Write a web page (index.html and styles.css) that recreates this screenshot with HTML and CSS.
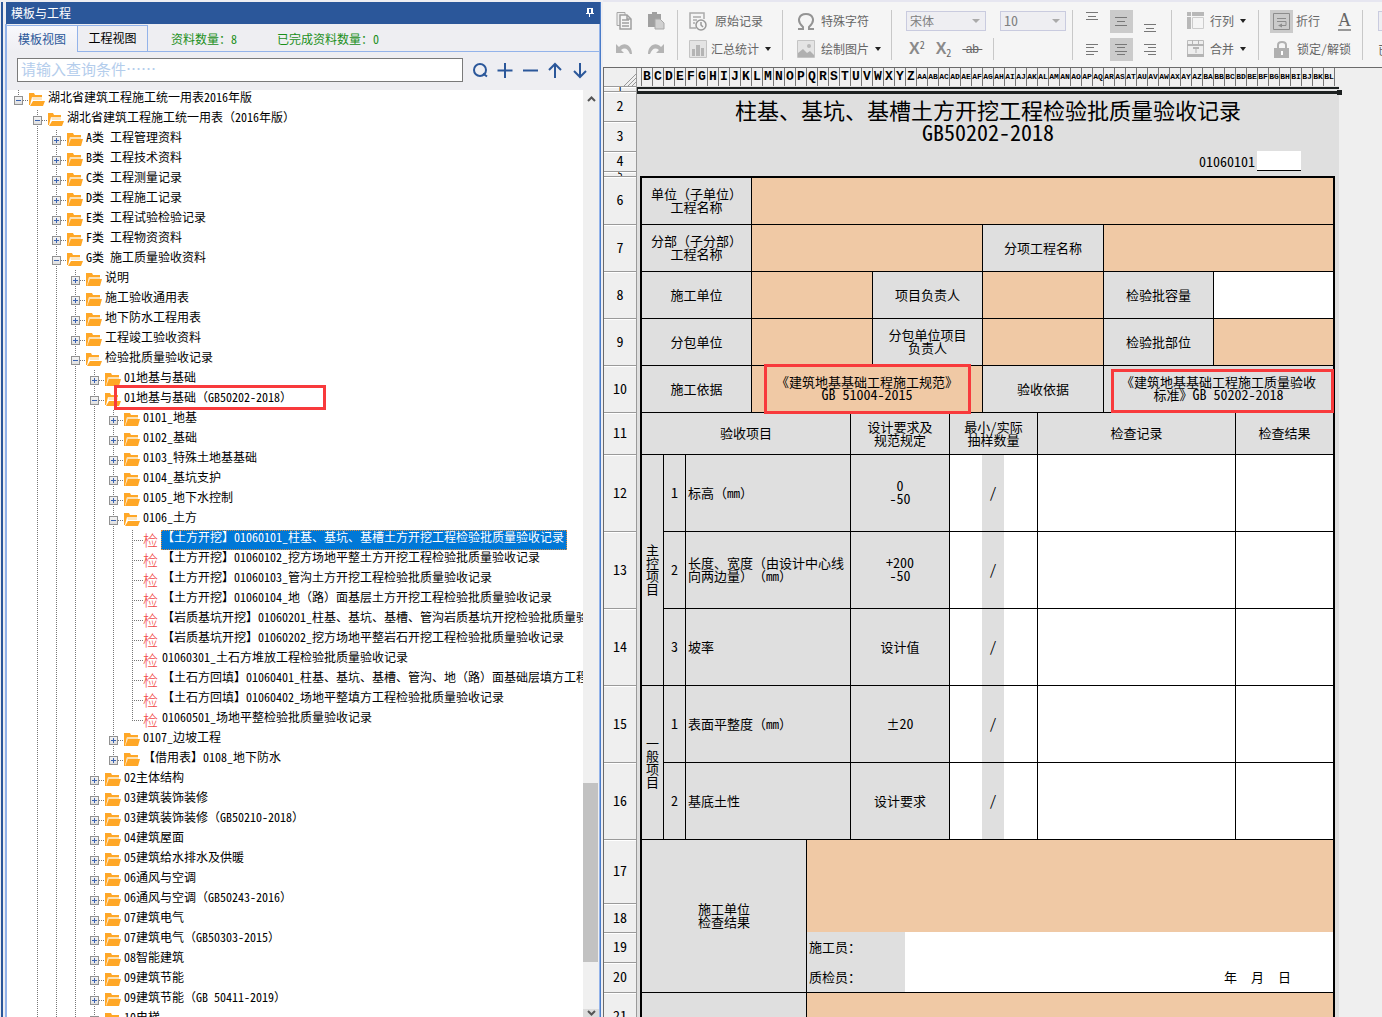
FILE: index.html
```html
<!DOCTYPE html>
<html lang="zh-CN">
<head>
<meta charset="utf-8">
<title>模板与工程</title>
<link rel="stylesheet" href="styles.css">
</head>
<body>
<svg class="defs" aria-hidden="true">
  <symbol id="fc" viewBox="0 0 16 14"><path fill="#ffa726" d="M0 0h6l1 2h7v2H3L1 13H0z"/><path fill="#fbe0b4" d="M3 4h11v2H5L2 12z"/><path fill="#ffa726" d="M4 6h12l-2 7H1z"/></symbol>
  <symbol id="fo" viewBox="0 0 16 14"><path fill="#ffa726" d="M0 0h5l1 2h7v2H3L1 12H0z"/><path fill="#fbe6c4" d="M3 4h10v3H4z"/><path fill="#ffa726" d="M4 8h12l-2 5H1z"/></symbol>
</svg>
<div class="app">
<aside class="dock">
  <header class="title"><span>模板与工程</span>
    <svg width="8" height="10" viewBox="0 0 8 10"><path fill="#fff" d="M1 1h6v5h1v1H4v3H3V7H0V6h1zM3 2v4h2V2z" fill-rule="evenodd"/></svg>
  </header>
  <div class="panel">
    <div class="tabs">
      <button class="tab on">模板视图</button><button class="tab">工程视图</button>
      <div class="counts"><span>资料数量：8</span><span>已完成资料数量：0</span></div>
    </div>
    <div class="search">
      <input type="text" aria-label="查询条件" placeholder="请输入查询条件……">
      <div class="tools">
        <button aria-label="查询"><svg width="18" height="18" viewBox="0 0 18 18"><circle cx="9" cy="9" r="6"/><path d="M12 12.500l4 3"/></svg></button>
        <button aria-label="展开"><svg width="18" height="18" viewBox="0 0 18 18"><path d="M9 2v15M1.500 9.500h15"/></svg></button>
        <button aria-label="收起"><svg width="18" height="18" viewBox="0 0 18 18"><path d="M2 9.500h15"/></svg></button>
        <button aria-label="上一个"><svg width="18" height="18" viewBox="0 0 18 18"><path d="M9 17V3M3 9l6-6 6 6"/></svg></button>
        <button aria-label="下一个"><svg width="18" height="18" viewBox="0 0 18 18"><path d="M9 2v14M3 10l6 6 6-6"/></svg></button>
      </div>
    </div>
    <div class="view">
      <div class="scroll">
      <ul class="tree root">
        <li><div class="row"><button class="ex open" aria-label="收起"></button><svg><use href="#fo"/></svg><span>湖北省建筑工程施工统一用表2016年版</span></div>
        <ul>
          <li><div class="row"><button class="ex open" aria-label="收起"></button><svg><use href="#fo"/></svg><span>湖北省建筑工程施工统一用表<span class="p">（</span>2016年版<span class="p">）</span></span></div>
          <ul>
            <li><div class="row"><button class="ex" aria-label="展开"></button><svg><use href="#fc"/></svg><span>A类 工程管理资料</span></div></li>
            <li><div class="row"><button class="ex" aria-label="展开"></button><svg><use href="#fc"/></svg><span>B类 工程技术资料</span></div></li>
            <li><div class="row"><button class="ex" aria-label="展开"></button><svg><use href="#fc"/></svg><span>C类 工程测量记录</span></div></li>
            <li><div class="row"><button class="ex" aria-label="展开"></button><svg><use href="#fc"/></svg><span>D类 工程施工记录</span></div></li>
            <li><div class="row"><button class="ex" aria-label="展开"></button><svg><use href="#fc"/></svg><span>E类 工程试验检验记录</span></div></li>
            <li><div class="row"><button class="ex" aria-label="展开"></button><svg><use href="#fc"/></svg><span>F类 工程物资资料</span></div></li>
            <li><div class="row"><button class="ex open" aria-label="收起"></button><svg><use href="#fo"/></svg><span>G类 施工质量验收资料</span></div>
            <ul>
              <li><div class="row"><button class="ex" aria-label="展开"></button><svg><use href="#fc"/></svg><span>说明</span></div></li>
              <li><div class="row"><button class="ex" aria-label="展开"></button><svg><use href="#fc"/></svg><span>施工验收通用表</span></div></li>
              <li><div class="row"><button class="ex" aria-label="展开"></button><svg><use href="#fc"/></svg><span>地下防水工程用表</span></div></li>
              <li><div class="row"><button class="ex" aria-label="展开"></button><svg><use href="#fc"/></svg><span>工程竣工验收资料</span></div></li>
              <li><div class="row"><button class="ex open" aria-label="收起"></button><svg><use href="#fo"/></svg><span>检验批质量验收记录</span></div>
              <ul>
                <li><div class="row"><button class="ex" aria-label="展开"></button><svg><use href="#fc"/></svg><span>01地基与基础</span></div></li>
                <li><div class="row marked"><button class="ex open" aria-label="收起"></button><svg><use href="#fo"/></svg><span>01地基与基础<span class="p">（</span>GB50202-2018<span class="p">）</span></span></div>
                <ul class="ends">
                  <li><div class="row"><button class="ex" aria-label="展开"></button><svg><use href="#fc"/></svg><span>0101_地基</span></div></li>
                  <li><div class="row"><button class="ex" aria-label="展开"></button><svg><use href="#fc"/></svg><span>0102_基础</span></div></li>
                  <li><div class="row"><button class="ex" aria-label="展开"></button><svg><use href="#fc"/></svg><span>0103_特殊土地基基础</span></div></li>
                  <li><div class="row"><button class="ex" aria-label="展开"></button><svg><use href="#fc"/></svg><span>0104_基坑支护</span></div></li>
                  <li><div class="row"><button class="ex" aria-label="展开"></button><svg><use href="#fc"/></svg><span>0105_地下水控制</span></div></li>
                  <li><div class="row"><button class="ex open" aria-label="收起"></button><svg><use href="#fo"/></svg><span>0106_土方</span></div>
                  <ul class="ends">
                    <li><div class="row leaf"><i>检</i><span class="sel">【土方开挖】01060101_柱基、基坑、基槽土方开挖工程检验批质量验收记录</span></div></li>
                    <li><div class="row leaf"><i>检</i><span>【土方开挖】01060102_挖方场地平整土方开挖工程检验批质量验收记录</span></div></li>
                    <li><div class="row leaf"><i>检</i><span>【土方开挖】01060103_管沟土方开挖工程检验批质量验收记录</span></div></li>
                    <li><div class="row leaf"><i>检</i><span>【土方开挖】01060104_地<span class="p">（</span>路<span class="p">）</span>面基层土方开挖工程检验批质量验收记录</span></div></li>
                    <li><div class="row leaf"><i>检</i><span>【岩质基坑开挖】01060201_柱基、基坑、基槽、管沟岩质基坑开挖检验批质量验收记录</span></div></li>
                    <li><div class="row leaf"><i>检</i><span>【岩质基坑开挖】01060202_挖方场地平整岩石开挖工程检验批质量验收记录</span></div></li>
                    <li><div class="row leaf"><i>检</i><span>01060301_土石方堆放工程检验批质量验收记录</span></div></li>
                    <li><div class="row leaf"><i>检</i><span>【土石方回填】01060401_柱基、基坑、基槽、管沟、地<span class="p">（</span>路<span class="p">）</span>面基础层填方工程检验批</span></div></li>
                    <li><div class="row leaf"><i>检</i><span>【土石方回填】01060402_场地平整填方工程检验批质量验收记录</span></div></li>
                    <li><div class="row leaf"><i>检</i><span>01060501_场地平整检验批质量验收记录</span></div></li>
                  </ul></li>
                  <li><div class="row"><button class="ex" aria-label="展开"></button><svg><use href="#fc"/></svg><span>0107_边坡工程</span></div></li>
                  <li><div class="row"><button class="ex" aria-label="展开"></button><svg><use href="#fc"/></svg><span>【借用表】0108_地下防水</span></div></li>
                </ul></li>
                <li><div class="row"><button class="ex" aria-label="展开"></button><svg><use href="#fc"/></svg><span>02主体结构</span></div></li>
                <li><div class="row"><button class="ex" aria-label="展开"></button><svg><use href="#fc"/></svg><span>03建筑装饰装修</span></div></li>
                <li><div class="row"><button class="ex" aria-label="展开"></button><svg><use href="#fc"/></svg><span>03建筑装饰装修<span class="p">（</span>GB50210-2018<span class="p">）</span></span></div></li>
                <li><div class="row"><button class="ex" aria-label="展开"></button><svg><use href="#fc"/></svg><span>04建筑屋面</span></div></li>
                <li><div class="row"><button class="ex" aria-label="展开"></button><svg><use href="#fc"/></svg><span>05建筑给水排水及供暖</span></div></li>
                <li><div class="row"><button class="ex" aria-label="展开"></button><svg><use href="#fc"/></svg><span>06通风与空调</span></div></li>
                <li><div class="row"><button class="ex" aria-label="展开"></button><svg><use href="#fc"/></svg><span>06通风与空调<span class="p">（</span>GB50243-2016<span class="p">）</span></span></div></li>
                <li><div class="row"><button class="ex" aria-label="展开"></button><svg><use href="#fc"/></svg><span>07建筑电气</span></div></li>
                <li><div class="row"><button class="ex" aria-label="展开"></button><svg><use href="#fc"/></svg><span>07建筑电气<span class="p">（</span>GB50303-2015<span class="p">）</span></span></div></li>
                <li><div class="row"><button class="ex" aria-label="展开"></button><svg><use href="#fc"/></svg><span>08智能建筑</span></div></li>
                <li><div class="row"><button class="ex" aria-label="展开"></button><svg><use href="#fc"/></svg><span>09建筑节能</span></div></li>
                <li><div class="row"><button class="ex" aria-label="展开"></button><svg><use href="#fc"/></svg><span>09建筑节能<span class="p">（</span>GB 50411-2019<span class="p">）</span></span></div></li>
                <li><div class="row"><button class="ex" aria-label="展开"></button><svg><use href="#fc"/></svg><span>10电梯</span></div></li>
              </ul></li>
            </ul></li>
          </ul></li>
        </ul></li>
      </ul>
      </div>
      <div class="bar">
        <button aria-label="向上滚动"><svg width="9" height="6" viewBox="0 0 9 6"><path d="M1 5l3.500-3.500L8 5"/></svg></button>
        <div class="track"><div class="thumb"></div></div>
        <button class="down" aria-label="向下滚动"><svg width="9" height="6" viewBox="0 0 9 6"><path d="M1 1l3.500 3.500L8 1"/></svg></button>
      </div>
    </div>
  </div>
</aside>

<main class="main">
  <div class="toolbar">
    <div class="group g1">
      <div class="line">
        <button aria-label="复制"><svg width="18" height="20" viewBox="0 0 18 20"><path fill="#eee" stroke="#a6a6a6" d="M2 1.500h8v13H2z"/><path fill="#f5f5f5" stroke="#a0a0a0" stroke-width="1.500" d="M5 4h7l4 4v10H5z"/><path stroke="#a0a0a0" stroke-width="1.500" fill="none" d="M7 9h7M7 12h7M7 15h7M12 4v4h4"/></svg></button>
        <button aria-label="粘贴"><svg width="18" height="20" viewBox="0 0 18 20"><path fill="#a0a0a0" d="M1 3h4V1h5v2h4v5H8v8H1z"/><path fill="#d0d0d0" stroke="#a8a8a8" d="M8 8h5l4 4v6H8z"/></svg></button>
      </div>
      <div class="line">
        <button aria-label="撤销"><svg width="18" height="14" viewBox="0 0 18 14"><path fill="#b4b4b4" d="M1 2v9h8L6 8c4-3 7-1 9 4h2C17 3 9-1 4 5z"/></svg></button>
        <button aria-label="重做"><svg width="18" height="14" viewBox="0 0 18 14"><path fill="#b4b4b4" d="M17 2v9H9l3-3c-4-3-7-1-9 4H1C1 3 9-1 14 5z"/></svg></button>
      </div>
    </div>
    <div class="group g2">
      <div class="line"><button><svg width="18" height="19" viewBox="0 0 18 19"><path fill="none" stroke="#aaa" stroke-width="1.500" d="M7 16H1V1h14v6M4 5h8M4 8h4M4 11h2"/><circle cx="12" cy="13" r="5" fill="#f5f5f5" stroke="#999" stroke-width="1.500"/><path fill="none" stroke="#999" stroke-width="1.500" d="M12 10v3l2 2"/></svg><span class="wide">原始记录</span></button></div>
      <div class="line"><button><svg width="18" height="18" viewBox="0 0 18 18"><path fill="#e4e4e4" stroke="#c4c4c4" d="M.5.500h17v17H.5z"/><path fill="#b4b4b4" d="M3 9h3v7H3zM7 5h4v11H7zM12 8h3v8h-3z"/></svg><span>汇总统计</span><b class="caret"></b></button></div>
    </div>
    <div class="group g3">
      <div class="line"><button><svg width="18" height="19" viewBox="0 0 18 19"><path fill="none" stroke="#949494" stroke-width="2" d="M1 17h5v-2C-1 9 2 2 9 2s10 7 3 13v2h5"/></svg><span>特殊字符</span></button></div>
      <div class="line"><button><svg width="18" height="18" viewBox="0 0 18 18"><path fill="#e4e4e4" stroke="#c4c4c4" d="M.5.500h17v17H.5z"/><path fill="#b0b0b0" d="M1 17v-4l5-4 4 4 3-2 4 4v2z"/><circle cx="12" cy="6" r="2" fill="#b8b8b8"/></svg><span>绘制图片</span><b class="caret"></b></button></div>
    </div>
    <div class="group g4">
      <div class="line">
        <span class="combo font"><select aria-label="字体"><option>宋体</option></select></span>
        <span class="combo size"><select aria-label="字号"><option>10</option></select></span>
      </div>
      <div class="line fmt"><button aria-label="上标"><strong>X</strong><sup>2</sup></button><button aria-label="下标"><strong>X</strong><sub>2</sub></button><button><s>&nbsp;ab&nbsp;</s></button><b class="short"></b></div>
    </div>
    <div class="group g5">
      <div class="line">
        <button aria-label="顶端对齐"><svg width="13" height="23" viewBox="0 0 13 23"><path d="M0 2.500h12M2 6.500h8M0 9.500h12"/></svg></button>
        <button class="on" aria-label="垂直居中"><svg width="13" height="23" viewBox="0 0 13 23"><path d="M0 7.500h12M2 11.500h8M0 15.500h12"/></svg></button>
        <button aria-label="底端对齐"><svg width="13" height="23" viewBox="0 0 13 23"><path d="M0 14.500h12M2 18.500h8M0 21.500h12"/></svg></button>
      </div>
      <div class="line">
        <button aria-label="左对齐"><svg width="13" height="23" viewBox="0 0 13 23"><path d="M0 6.500h12M0 9.500h8M0 13.500h12M0 16.500h8"/></svg></button>
        <button class="on" aria-label="居中"><svg width="13" height="23" viewBox="0 0 13 23"><path d="M0 6.500h12M2 9.500h8M0 13.500h12M2 16.500h8"/></svg></button>
        <button aria-label="右对齐"><svg width="13" height="23" viewBox="0 0 13 23"><path d="M0 6.500h12M4 9.500h8M0 13.500h12M4 16.500h8"/></svg></button>
      </div>
    </div>
    <div class="group g6">
      <div class="line"><button><svg width="18" height="18" viewBox="0 0 18 18"><path fill="#b8b8b8" d="M0 0h4v4H0zM5 0h12v4H5zM0 5h4v12H0z"/><path fill="#f5f5f5" stroke="#ccc" d="M5.500 5.500h11v11h-11z"/></svg><span>行列</span><b class="caret"></b></button></div>
      <div class="line"><button><svg width="18" height="18" viewBox="0 0 18 18"><path fill="#eee" stroke="#bbb" d="M.5.500h16v16H.5z"/><path fill="#b4b4b4" d="M0 4h17v2H0zM0 14h17v3H0zM5 0h1v5H5zM11 0h1v5h-1zM6 7h6v2H9.500v4h-1V9H6z"/></svg><span>合并</span><b class="caret"></b></button></div>
    </div>
    <div class="group g7">
      <div class="line"><button class="wrap"><em><svg width="17" height="17" viewBox="0 0 17 17"><path fill="none" stroke="#8c8c8c" d="M.5.500h16v16H.5zM4 5.500h9M4 8.500h9v4H9"/><path fill="#8c8c8c" d="M5 12.500l4-2v4z"/></svg></em><span>折行</span></button><button class="color">A</button></div>
      <div class="line"><button class="lock"><svg width="16" height="17" viewBox="0 0 16 17"><path fill="none" stroke="#b0b0b0" stroke-width="2" d="M4 8V4c0-4 8-4 8 0v4"/><path fill="#b0b0b0" d="M0 7h15v10H0z"/><path fill="#fff" d="M7 10h2v4H7z"/></svg><span>锁定/解锁</span></button></div>
    </div>
    <div class="group g8">
      <div class="line"><span class="combo"><select aria-label="样式"><option> </option></select></span></div>
      <div class="line">已</div>
    </div>
  </div>

  <div class="sheet">
  <table>
    <colgroup><col class="w33"><col class="w3"><col class="w23"><col class="w22"><col class="w66"><col class="w55"><col class="w44"><col class="w22"><col class="w33"><col class="w44"><col class="w33"><col class="w22"><col class="w33"><col class="w66"><col class="w110"><col class="w22"><col class="w22"><col class="w44"><col class="w34"><col class="w4"></colgroup>
    <thead><tr class="heads"><th class="corner"><svg width="12" height="12" viewBox="0 0 12 12"><path stroke="#999" d="M0 12L12 0M4 12l8-8M8 12l4-4"/></svg></th><th colspan="19"><div class="letters"><span>B</span><span>C</span><span>D</span><span>E</span><span>F</span><span>G</span><span>H</span><span>I</span><span>J</span><span>K</span><span>L</span><span>M</span><span>N</span><span>O</span><span>P</span><span>Q</span><span>R</span><span>S</span><span>T</span><span>U</span><span>V</span><span>W</span><span>X</span><span>Y</span><span>Z</span><span class="two">AA</span><span class="two">AB</span><span class="two">AC</span><span class="two">AD</span><span class="two">AE</span><span class="two">AF</span><span class="two">AG</span><span class="two">AH</span><span class="two">AI</span><span class="two">AJ</span><span class="two">AK</span><span class="two">AL</span><span class="two">AM</span><span class="two">AN</span><span class="two">AO</span><span class="two">AP</span><span class="two">AQ</span><span class="two">AR</span><span class="two">AS</span><span class="two">AT</span><span class="two">AU</span><span class="two">AV</span><span class="two">AW</span><span class="two">AX</span><span class="two">AY</span><span class="two">AZ</span><span class="two">BA</span><span class="two">BB</span><span class="two">BC</span><span class="two">BD</span><span class="two">BE</span><span class="two">BF</span><span class="two">BG</span><span class="two">BH</span><span class="two">BI</span><span class="two">BJ</span><span class="two">BK</span><span class="two">BL</span></div></th></tr></thead>
    <tbody>
    <tr class="h5"><th><div class="clip">1</div></th><td colspan="19" class="bg"><div class="cursor"></div></td></tr>
    <tr class="h30"><th>2</th><td colspan="19" rowspan="2" class="bg heading">柱基、基坑、基槽土方开挖工程检验批质量验收记录<br>GB50202-2018</td></tr>
    <tr class="h30"><th>3</th></tr>
    <tr class="h20"><th>4</th><td colspan="16" class="bg code">01060101</td><td class="blank"></td><td colspan="2" class="bg"></td></tr>
    <tr class="h5"><th><div class="clip">5</div></th><td colspan="19" class="bg"></td></tr>
    <tr class="h48 top"><th>6</th><td rowspan="16" class="bg"></td><td colspan="3" class="c first">单位<span class="p">（</span>子单位<span class="p">）</span><br>工程名称</td><td colspan="14" class="c o last"></td><td rowspan="16" class="bg"></td></tr>
    <tr class="h47"><th>7</th><td colspan="3" class="c first">分部<span class="p">（</span>子分部<span class="p">）</span><br>工程名称</td><td colspan="6" class="c o"></td><td colspan="3" class="c">分项工程名称</td><td colspan="5" class="c o last"></td></tr>
    <tr class="h47"><th>8</th><td colspan="3" class="c first">施工单位</td><td colspan="3" class="c o"></td><td colspan="3" class="c">项目负责人</td><td colspan="3" class="c o"></td><td class="c">检验批容量</td><td colspan="4" class="c w last"></td></tr>
    <tr class="h47"><th>9</th><td colspan="3" class="c first">分包单位</td><td colspan="3" class="c o"></td><td colspan="3" class="c">分包单位项目<br>负责人</td><td colspan="3" class="c o"></td><td class="c">检验批部位</td><td colspan="4" class="c o last"></td></tr>
    <tr class="h47"><th>10</th><td colspan="3" class="c first">施工依据</td><td colspan="6" class="c o mark-a">《建筑地基基础工程施工规范》<br><span class="n">GB 51004-2015</span></td><td colspan="3" class="c">验收依据</td><td colspan="5" class="c last mark-b">《建筑地基基础工程施工质量验收<br>标准》<span class="n">GB 50202-2018</span></td></tr>
    <tr class="h42"><th>11</th><td colspan="5" class="c first">验收项目</td><td colspan="3" class="c">设计要求及<br>规范规定</td><td colspan="3" class="c">最小/实际<br>抽样数量</td><td colspan="3" class="c">检查记录</td><td colspan="3" class="c last">检查结果</td></tr>
    <tr class="h77"><th>12</th><td rowspan="3" class="c first">主<br>控<br>项<br>目</td><td class="c n">1</td><td colspan="3" class="c left">标高<span class="p">（</span>mm<span class="p">）</span></td><td colspan="3" class="c n">0<br>-50</td><td class="c w"></td><td class="c nl n">/</td><td class="c w nl"></td><td colspan="3" class="c w"></td><td colspan="3" class="c w last"></td></tr>
    <tr class="h77"><th>13</th><td class="c n">2</td><td colspan="3" class="c left">长度、宽度<span class="p">（</span>由设计中心线<br>向两边量<span class="p">）（</span>mm<span class="p">）</span></td><td colspan="3" class="c n">+200<br>-50</td><td class="c w"></td><td class="c nl n">/</td><td class="c w nl"></td><td colspan="3" class="c w"></td><td colspan="3" class="c w last"></td></tr>
    <tr class="h77"><th>14</th><td class="c n">3</td><td colspan="3" class="c left">坡率</td><td colspan="3" class="c">设计值</td><td class="c w"></td><td class="c nl n">/</td><td class="c w nl"></td><td colspan="3" class="c w"></td><td colspan="3" class="c w last"></td></tr>
    <tr class="h77"><th>15</th><td rowspan="2" class="c first">一<br>般<br>项<br>目</td><td class="c n">1</td><td colspan="3" class="c left">表面平整度<span class="p">（</span>mm<span class="p">）</span></td><td colspan="3" class="c">±<span class="n">20</span></td><td class="c w"></td><td class="c nl n">/</td><td class="c w nl"></td><td colspan="3" class="c w"></td><td colspan="3" class="c w last"></td></tr>
    <tr class="h77"><th>16</th><td class="c n">2</td><td colspan="3" class="c left">基底土性</td><td colspan="3" class="c">设计要求</td><td class="c w"></td><td class="c nl n">/</td><td class="c w nl"></td><td colspan="3" class="c w"></td><td colspan="3" class="c w last"></td></tr>
    <tr class="h64"><th>17</th><td colspan="4" rowspan="4" class="c first">施工单位<br>检查结果</td><td colspan="13" rowspan="2" class="c o last"></td></tr>
    <tr class="h29"><th>18</th></tr>
    <tr class="h30"><th>19</th><td colspan="3" class="c left nt">施工员：</td><td colspan="10" class="c w nt nl last"></td></tr>
    <tr class="h30"><th>20</th><td colspan="3" class="c left nt">质检员：</td><td colspan="10" class="c w nt nl last date"><span>年</span><span>月</span><span>日</span></td></tr>
    <tr class="h47"><th>21</th><td colspan="4" class="c first"></td><td colspan="13" class="c o last"></td></tr>
    </tbody>
  </table>
  </div>
</main>
</div>
</body>
</html>
```
FILE: styles.css
```css
*, *::before, *::after { box-sizing: border-box; }
body {
  margin: 0;
  font-family: "Noto Sans CJK SC", sans-serif;
  font-size: 12px;
  font-feature-settings: "hwid";
  text-spacing-trim: space-all;
  color: #000;
  background: #eeeef2;
}
button, input, select { font: inherit; font-feature-settings: inherit; color: inherit; }
button { padding: 0; border: 0; background: none; }
.defs { display: none; }
.p { font-feature-settings: normal; }
.app { display: grid; grid-template-columns: 603fr 779fr; height: 100vh; overflow: hidden; }

/* docked template panel */
.dock {
  display: flex; flex-direction: column; min-height: 0; min-width: 0;
  margin: 2px 2px 0 1px; padding-left: 2px;
  border-left: 2px solid #2b579a; border-right: 1px solid #4a7cc8;
}
.title {
  display: flex; align-items: center; justify-content: space-between;
  height: 22px; flex: none; padding: 0 6px 2px 5px; margin-left: 1px;
  background: #2b579a; color: #fff;
}
.panel { display: flex; flex-direction: column; flex: 1; min-height: 0; border-left: 2px solid #93b3ea; border-right: 1px solid #93b3ea; }
.tabs { display: flex; height: 28px; flex: none; padding-top: 1px; border-bottom: 1px solid #93b3ea; }
.tab { width: 70px; padding-bottom: 2px; border-top: 1px solid #93b3ea; border-right: 1px solid #93b3ea; }
.tab.on { width: 71px; margin-bottom: -1px; background: linear-gradient(#f8f8fc, #eeeef2); color: #2b579a; }
.counts { display: flex; align-items: center; gap: 40px; padding-left: 23px; color: #1a8f1a; }
.search { display: flex; align-items: center; height: 38px; flex: none; padding: 0 7px 2px 10px; }
.search input {
  flex: 1; min-width: 0; height: 24px; padding: 0 3px 4px;
  border: 1px solid #7a7a7a; background: #fff; font-size: 15px; line-height: 18px;
}
.search input::placeholder { color: #b4cdec; opacity: 1; }
.tools { display: flex; padding-left: 4px; }
.tools button { width: 25px; height: 24px; display: grid; place-items: center; }
.tools svg { fill: none; stroke: #2b579a; stroke-width: 2; }
.view { display: flex; flex: 1; min-height: 0; background: #fff; }
.scroll { flex: 1; min-width: 0; overflow: hidden; }
.bar { width: 16px; flex: none; display: flex; flex-direction: column; background: #f0f0f0; }
.bar button { height: 18px; display: grid; place-items: center; }
.bar .down { height: 8px; background: #dcdcdc; overflow: hidden; }
.bar path { fill: none; stroke: #555; stroke-width: 2; }
.track { flex: 1; display: flex; flex-direction: column; justify-content: flex-end; padding-bottom: 47px; }
.thumb { width: 15px; height: 21%; background: #c2c2c2; }

/* template tree */
.tree, .tree ul {
  list-style: none; margin: 0; padding: 0;
  background: repeating-linear-gradient(#777 0 1px, transparent 1px 2px) 4px 0 / 1px 100% no-repeat;
}
.tree { margin-left: 7px; }
.tree.root { background-size: 1px 10px; }
.tree ul { margin-left: 19px; }
.tree ul.ends { background-size: 1px calc(100% - 10px); }
.row { display: flex; align-items: center; height: 20px; white-space: nowrap; position: relative; }
.row > svg { width: 16px; height: 14px; flex: none; }
.row > span { align-self: flex-start; flex: none; height: 20px; line-height: 14px; padding-left: 3px; }
.ex {
  width: 15px; height: 9px; flex: none;
  background:
    linear-gradient(#3a62b0, #3a62b0) 2px 4px / 5px 1px no-repeat,
    linear-gradient(#3a62b0, #3a62b0) 4px 2px / 1px 5px no-repeat,
    linear-gradient(#f4f4f4, #e0e0e0) 1px 1px / 7px 7px no-repeat,
    linear-gradient(#919191, #919191) 0 0 / 9px 9px no-repeat,
    repeating-linear-gradient(90deg, #777 0 1px, transparent 1px 2px) 9px 4px / 6px 1px no-repeat;
}
.ex.open {
  background:
    linear-gradient(#3a62b0, #3a62b0) 2px 4px / 5px 1px no-repeat,
    linear-gradient(#f4f4f4, #e0e0e0) 1px 1px / 7px 7px no-repeat,
    linear-gradient(#919191, #919191) 0 0 / 9px 9px no-repeat,
    repeating-linear-gradient(90deg, #777 0 1px, transparent 1px 2px) 9px 4px / 6px 1px no-repeat;
}
.leaf { padding-left: 15px; background: repeating-linear-gradient(90deg, #777 0 1px, transparent 1px 2px) 4px 10px / 11px 1px no-repeat; }
.leaf i { width: 18px; flex: none; font-style: normal; font-size: 15px; line-height: 20px; font-weight: 300; color: #f04848; }
.leaf > span { padding-left: 1px; }
.leaf > .sel { padding-right: 3px; background: #0078d7; color: #fff; outline: 1px dotted #d98a3c; outline-offset: -1px; }
.marked::after { content: ""; position: absolute; left: 24px; width: 212px; top: -5px; height: 25px; border: 3px solid #f83a3c; }

/* toolbar */
.main { display: flex; flex-direction: column; min-width: 0; min-height: 0; background: #efefef; overflow: hidden; }
.toolbar { display: flex; height: 68px; flex: none; padding-top: 7px; background: #f5f5f5; border-top: 2px solid #e6e6f0; border-bottom: 1px solid #6b6b6b; color: #666; }
.group { flex: none; height: 50px; margin-top: 1px; border-right: 1px solid #c8c8c8; }
.line { display: flex; align-items: center; height: 22px; margin-bottom: 6px; }
.line button { display: flex; align-items: center; white-space: nowrap; }
.line svg { flex: none; }
.line button > span { padding-bottom: 2px; }
.caret { margin-left: 6px; border: 3px solid transparent; border-top: 4px solid #222; border-bottom: 0; }
.g1 { width: 75px; padding-left: 12px; }
.g1 .line { gap: 14px; }
.g2 { width: 105px; padding-left: 11px; }
.g2 span { margin-left: 4px; }
.g2 .wide { margin-left: 8px; }
.g3 { width: 109px; padding-left: 14px; }
.g3 span { margin-left: 6px; }
.g4 { width: 181px; padding-left: 14px; }
.g4 .line { gap: 14px; }
.combo { display: flex; position: relative; height: 20px; border: 1px solid #c9cbdf; background: #eeeef2; }
.combo::after { content: ""; position: absolute; right: 5px; top: 7px; border: 4px solid transparent; border-top-color: #aaa; border-bottom: 0; }
.combo select { appearance: none; width: 100%; border: 0; background: none; padding: 0 3px 2px; color: #808080; }
.font { width: 80px; }
.size { width: 66px; }
.size select { font-size: 14px; line-height: 16px; }
.fmt strong { font: 700 16px "Liberation Sans", sans-serif; color: #8a8a8a; }
.fmt sup, .fmt sub { font-size: 10px; line-height: 10px; }
.fmt sup { align-self: flex-start; }
.fmt sub { align-self: flex-end; }
.g4 .fmt { gap: 11px; padding-left: 3px; }
.fmt s { font: 12px "Liberation Sans", sans-serif; }
.short { width: 1px; height: 22px; background: #c8c8c8; }
.g5 { width: 99px; padding-left: 8px; }
.g5 .line { gap: 6px; }
.g5 button { width: 23px; height: 23px; justify-content: center; }
.g5 .on, .wrap em { background: #cbcbcb; }
.g5 path { stroke: #777; }
.g6 { width: 87px; padding-left: 15px; }
.g6 span { margin-left: 5px; }
.g7 { width: 104px; padding-left: 11px; }
.g7 .line { justify-content: space-between; padding-right: 11px; }
.wrap em { width: 23px; height: 23px; display: grid; place-items: center; margin-right: 3px; }
.color { font: 18px/17px "Liberation Serif", serif; border-bottom: 2px solid #999; }
.lock { padding-left: 4px; }
.lock span { margin-left: 7px; }
.g8 { flex: 1; min-width: 0; border: 0; padding-left: 15px; overflow: hidden; }
.g8 .combo { width: 80px; flex: none; }

/* form sheet */
.sheet { flex: 1; min-height: 0; overflow: hidden; border-left: 1px solid #6b6b6b; }
table { width: 735px; table-layout: fixed; border-collapse: separate; border-spacing: 0; font-size: 13px; line-height: 13px; }
.w3 { width: 3px; } .w4 { width: 4px; } .w22 { width: 22px; } .w23 { width: 23px; } .w33 { width: 33px; }
.w34 { width: 34px; } .w44 { width: 44px; } .w55 { width: 55px; } .w66 { width: 66px; } .w110 { width: 110px; }
.h5 { height: 5px; } .h20 { height: 20px; } .h29 { height: 29px; } .h30 { height: 30px; } .h42 { height: 42px; }
.h47 { height: 47px; } .h48 { height: 48px; } .h64 { height: 64px; } .h77 { height: 77px; }
th, td { padding: 0; }
tbody th { padding-bottom: 2px; font-size: 14px; font-weight: 400; background: #efefef; border-top: 1px solid #9a9a9a; border-right: 1px solid #9a9a9a; box-shadow: inset 0 1px #fff; }
tbody .h5 th { padding: 0; }
.clip { height: 4px; overflow: hidden; line-height: 4px; font-size: 10px; }
.heads { height: 18px; background: #efefef; }
.corner { text-align: right; vertical-align: bottom; border-right: 1px solid #9a9a9a; }
.corner svg { display: block; margin-left: auto; }
.letters { display: flex; margin-left: 4px; border-right: 1px solid #777; width: 694px; }
.letters span { width: 11px; height: 18px; flex: none; display: flex; justify-content: center; overflow: hidden; border-left: 1px solid #777; font: 700 13px/18px "Liberation Mono", monospace; }
.letters .two { font-size: 8px; }
.bg { background: #dfdfdf; }
.cursor { position: relative; }
.cursor::before { content: ""; position: absolute; z-index: 1; left: 0; right: 0; top: -2px; height: 7px; background: #e6e6e6; border: solid #1c2020; border-width: 2px 0 3px 1px; }
.cursor::after { content: ""; position: absolute; z-index: 2; right: -3px; top: 1px; width: 5px; height: 5px; background: #1c2020; }
.heading { text-align: center; font-size: 22px; line-height: 22px; padding-bottom: 3px; }
.code { text-align: right; padding-right: 2px; font-size: 14px; }
.blank { background: #fff; border-bottom: 1px solid #000; }
.c { padding-bottom: 2px; background: #dfdfdf; border-top: 1px solid #000; border-left: 1px solid #000; text-align: center; white-space: nowrap; }
.c.o { background: #f0c9a5; }
.c.w { background: #fff; }
.c.first { border-left-width: 2px; }
.c.last { border-right: 2px solid #000; }
.top .c { border-top-width: 2px; }
.c.nl { border-left: 0; }
.c.nt { border-top: 0; }
.c.left { text-align: left; padding-left: 2px; }
.n { font-size: 14px; }
.c.date { text-align: right; padding-right: 42px; }
.date span { margin-left: 14px; }
.mark-a, .mark-b { position: relative; }
.mark-a::after, .mark-b::after { content: ""; position: absolute; border: 3px solid #f83a3c; }
.mark-a::after { inset: -2px 11px -2px 12px; }
.mark-b::after { inset: 3px -1px -1px 7px; }
```
